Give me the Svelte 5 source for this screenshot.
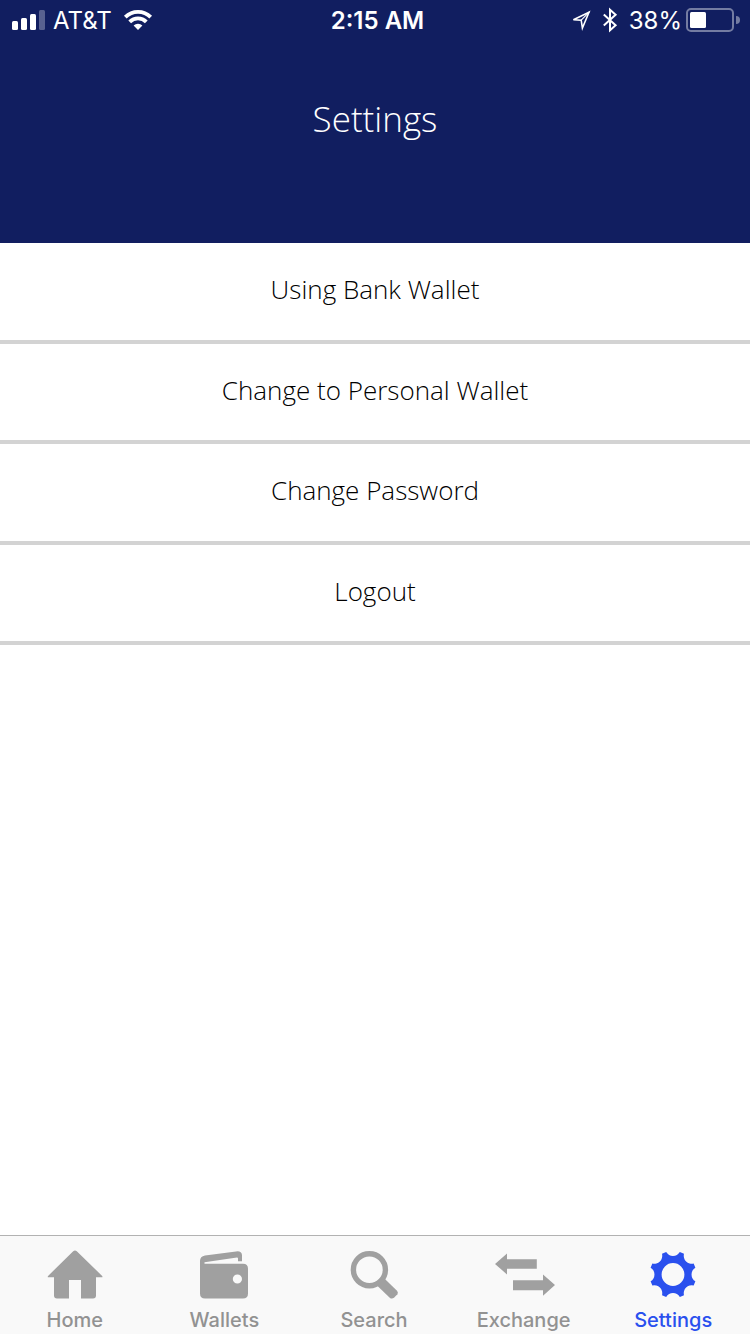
<script>
  const options = ['Using Bank Wallet', 'Change to Personal Wallet', 'Change Password', 'Logout'];
  const tabs = ['Home', 'Wallets', 'Search', 'Exchange', 'Settings'];
  let active = $state('Settings');

  // Eight teeth separated by round notches, with a round hole in the middle.
  function gearPath() {
    const point = (deg) => {
      const a = (deg * Math.PI) / 180;
      return `${(30 + 23.4 * Math.sin(a)).toFixed(2)} ${(25.5 - 23.4 * Math.cos(a)).toFixed(2)}`;
    };
    let d = `M${point(-17)}`;
    for (let i = 0; i < 8; i++) {
      d += `A8 8 0 0 0 ${point(i * 45 + 17)}L${point(i * 45 + 28)}`;
    }
    return d + 'ZM41.4 25.5a11.4 11.4 0 1 0-22.8 0a11.4 11.4 0 1 0 22.8 0Z';
  }
  const gear = gearPath();
</script>

<div class="screen">
  <header>
    <div class="status">
      <div class="side">
        <svg width="33" height="20" viewBox="0 0 33 20" fill="#fff" aria-hidden="true">
          <rect x="0" y="11" width="6" height="9" rx="1.5" />
          <rect x="9" y="8" width="6" height="12" rx="1.5" />
          <rect x="18" y="4" width="6" height="16" rx="1.5" />
          <rect x="27" y="0" width="6" height="20" rx="1.5" opacity=".3" />
        </svg>
        <span class="carrier">AT&amp;T</span>
        <svg width="28" height="20" viewBox="0 0 28 20" aria-hidden="true">
          <g fill="none" stroke="#fff" stroke-width="3.8">
            <path d="M1.3 7.2a18 18 0 0 1 25.4 0" />
            <path d="M5.7 11.8a11.7 11.7 0 0 1 16.6 0" />
          </g>
          <path d="M14 20l-4.4-4.4a6.2 6.2 0 0 1 8.8 0z" fill="#fff" />
        </svg>
      </div>
      <span class="time">2:15 AM</span>
      <div class="side end">
        <svg width="20" height="20" viewBox="0 0 20 20" aria-hidden="true">
          <path d="M18 2.2L2.4 9.8L10.2 10.2L11.4 18Z" fill="none" stroke="#fff" stroke-width="1.6" />
          <path d="M18.4 1.8L10.2 10.2" stroke="#fff" stroke-width="1.2" />
        </svg>
        <svg class="bluetooth" width="14" height="24" viewBox="0 0 14 24" aria-hidden="true">
          <path d="M.8 6.6L12.6 17.2L7 22.2V1.8L12.6 6.8L.8 17.4" fill="none" stroke="#fff" stroke-width="2" />
        </svg>
        <span class="percent">38%</span>
        <svg width="53" height="24" viewBox="0 0 53 24" aria-hidden="true">
          <rect x="1" y="1" width="46" height="22" rx="4" fill="none" stroke="#fff" stroke-opacity=".42" stroke-width="2" />
          <rect x="4" y="4" width="16" height="16" rx="1.5" fill="#fff" />
          <path d="M50 8a4 4 0 0 1 0 8z" fill="#fff" opacity=".42" />
        </svg>
      </div>
    </div>
    <h1>Settings</h1>
  </header>

  <main>
    {#each options as option}
      <button type="button">{option}</button>
    {/each}
  </main>

  <nav>
    {#each tabs as tab}
      <a
        href="#{tab.toLowerCase()}"
        class:active={active === tab}
        aria-current={active === tab ? 'page' : undefined}
        onclick={() => (active = tab)}
      >
        <svg width="60" height="52" viewBox="0 0 60 52" fill="currentColor" aria-hidden="true">
          {#if tab === 'Home'}
            <path d="M28.2 2.2q1.8-1.6 3.6 0L57.4 27.2v1H51V46.5q0 3-3 3H36V31H24v18.5H12q-3 0-3-3V28.2H2.8v-1z" />
          {:else if tab === 'Wallets'}
            <path
              fill-rule="evenodd"
              d="M6 12q0-4.5 5-5.4L42 2.5q5.5-.8 6 3.5v6.2h-4V9.5q0-1-1-1L10.5 13.2v1.6H49q5 0 5 5V44.5q0 5-5 5H11q-5 0-5-5zM48 30a4.6 4.6 0 1 0-9.2 0a4.6 4.6 0 1 0 9.2 0z"
            />
          {:else if tab === 'Search'}
            <circle cx="25.4" cy="20.7" r="16" fill="none" stroke="currentColor" stroke-width="5.4" />
            <path d="M33 36.4L40.4 29.6L53 41.8q1.6 1.8.4 3.4L50 48.8q-2 1.5-4 .2z" />
          {:else if tab === 'Exchange'}
            <path d="M1 15L13 4.5V10.2H42.8V19.8H13V25.4z" />
            <path d="M61 36L49 46.8V41.2H19V31.2H49V25.6z" />
          {:else}
            <path fill-rule="evenodd" d={gear} />
          {/if}
        </svg>
        <span>{tab}</span>
      </a>
    {/each}
  </nav>
</div>

<style>
  :global(body) {
    margin: 0;
    background: #fff;
  }

  .screen {
    display: flex;
    flex-direction: column;
    min-height: 100vh;
    font-family: Inter, "Liberation Sans", sans-serif;
  }

  svg {
    display: block;
    flex: none;
    overflow: visible;
  }

  header {
    padding-bottom: 99px;
    background: #111e60;
    color: #fff;
  }

  .status {
    display: grid;
    grid-template-columns: 1fr auto 1fr;
    align-items: center;
    height: 40px;
    padding: 0 11px 0 12px;
    font-size: 24px;
    line-height: 38px;
  }

  .status span {
    padding-top: 2px;
  }

  .side {
    display: flex;
    align-items: center;
  }

  .end {
    justify-content: flex-end;
  }

  .carrier {
    margin: 0 12px 0 8px;
  }

  .bluetooth {
    margin: 0 12px;
  }

  .percent {
    margin-right: 4px;
  }

  .status .time {
    padding-left: 4px;
    font-weight: 600;
  }

  h1 {
    margin: 54px 0 0;
    font: 300 35px/50px "Open Sans", "Noto Sans", sans-serif;
    text-align: center;
  }

  main {
    display: grid;
    grid-template-rows: repeat(4, 1fr);
    min-height: 402px;
    margin-bottom: auto;
  }

  button {
    padding: 0 16px 4px;
    border: 0;
    border-bottom: 4px solid #d3d3d3;
    background: #fff;
    color: #000;
    font: 300 26px/36px "Open Sans", "Noto Sans", sans-serif;
    cursor: pointer;
  }

  nav {
    display: grid;
    grid-template-columns: repeat(5, 1fr);
    padding-right: 2px;
    border-top: 1px solid #b2b2b2;
    background: #f9f9f9;
  }

  a {
    display: flex;
    flex-direction: column;
    align-items: center;
    padding: 13px 0 2px;
    color: #a0a0a0;
    font-size: 20px;
    font-weight: 500;
    line-height: 24px;
    text-decoration: none;
  }

  a span {
    padding-top: 7px;
    color: #929292;
  }

  .active,
  .active span {
    color: #2a50ee;
  }
</style>
